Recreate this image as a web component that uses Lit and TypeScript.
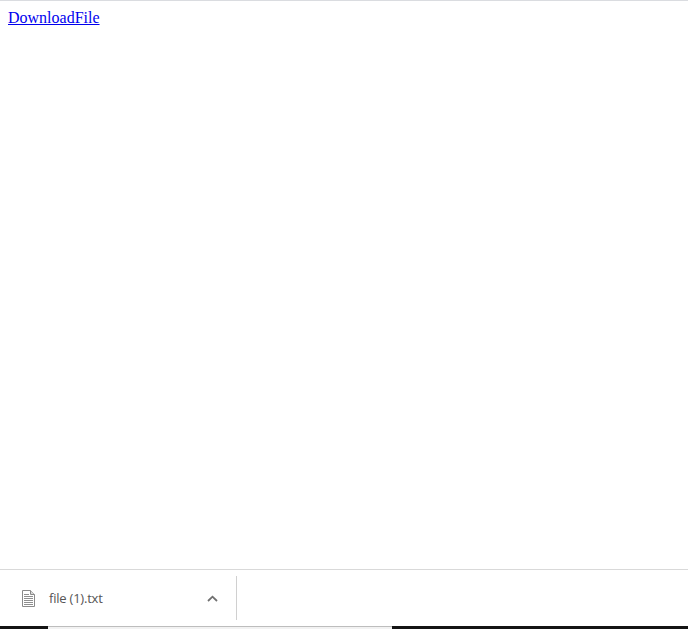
import { LitElement, html, css } from "lit";
import { customElement } from "lit/decorators.js";

@customElement("app-root")
export class AppRoot extends LitElement {
  static styles = css`
    :host { display: flex; flex-direction: column; width: 688px; height: 629px; background: #fff; overflow: hidden; }
    .page { flex: 1; border-top: 1px solid #dadce0; padding: 8px; font: 16px/18px "Liberation Serif", serif; min-height: 0; }
    .page a { color: #0000ee; text-decoration: underline; }
    .shelf { height: 56px; border-top: 1px solid #d9d9d9; display: flex; align-items: center; box-sizing: content-box; }
    .item { width: 236px; height: 44px; border-right: 1px solid #d0d0d0; display: flex; align-items: center; box-sizing: content-box; }
    .file { margin-left: 22px; display: block; flex: none; }
    .name { margin-left: 14px; flex: 1; font: 13px "Open Sans", "Liberation Sans", sans-serif; color: #555; letter-spacing: -0.22px; }
    .chev { margin-right: 18px; display: block; flex: none; }
    .task { height: 3px; display: flex; flex: none; }
    .dark { background: #141414; }
    .d1 { width: 48px; }
    .d2 { flex: 1; }
    .mid { width: 344px; box-sizing: border-box; background: #f2f2f2; border-top: 1px solid #bdbdbd; }
  `;
  render() {
    return html`
      <div class="page"><a href="#">DownloadFile</a></div>
      <div class="shelf">
        <div class="item">
          <svg class="file" width="13" height="17" viewBox="0 0 13 17" fill="none">
            <path d="M.5.5H8.5L12.5 4.5V16.5H.5Z" fill="#fff" stroke="#8a8a8a"/>
            <path d="M8.5.5V4.5H12.5" fill="#d8d8d8" stroke="#8a8a8a"/>
            <path d="M2 4.5H7M2 6.5H11M2 8.5H11M2 10.5H11M2 12.5H11M2 14.5H11" stroke="#8f8f8f"/>
          </svg>
          <span class="name">file (1).txt</span>
          <svg class="chev" width="11" height="7" viewBox="0 0 11 7" fill="none">
            <path d="M1 6L5.5 1.7L10 6" stroke="#707070" stroke-width="1.8"/>
          </svg>
        </div>
      </div>
      <div class="task"><div class="dark d1"></div><div class="mid"></div><div class="dark d2"></div></div>
    `;
  }
}
